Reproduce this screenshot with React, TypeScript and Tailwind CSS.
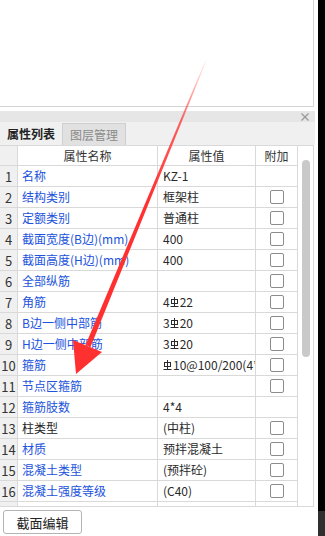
const rows: { name: string; value: React.ReactNode; black?: boolean; check: boolean }[] = [];

function Rebar() {
  return (
    <svg width="9" height="11" viewBox="0 0 9 11" className="inline-block shrink-0 align-[-1px] mr-[1px]" fill="none" stroke="currentColor" strokeWidth="1">
      <rect x="1.5" y="2.5" width="6" height="4" />
      <line x1="4.5" y1="0" x2="4.5" y2="9" />
      <line x1="0.5" y1="9.5" x2="8.5" y2="9.5" />
    </svg>
  );
}

rows.push(
  { name: "名称", value: "KZ-1", check: false },
  { name: "结构类别", value: "框架柱", check: true },
  { name: "定额类别", value: "普通柱", check: true },
  { name: "截面宽度(B边)(mm)", value: "400", check: true },
  { name: "截面高度(H边)(mm)", value: "400", check: true },
  { name: "全部纵筋", value: "", check: true },
  { name: "角筋", value: <>4<Rebar />22</>, check: true },
  { name: "B边一侧中部筋", value: <>3<Rebar />20</>, check: true },
  { name: "H边一侧中部筋", value: <>3<Rebar />20</>, check: true },
  { name: "箍筋", value: <><Rebar />10@100/200(4*4)</>, check: true },
  { name: "节点区箍筋", value: "", check: true },
  { name: "箍筋肢数", value: "4*4", check: false },
  { name: "柱类型", value: "(中柱)", black: true, check: true },
  { name: "材质", value: "预拌混凝土", check: true },
  { name: "混凝土类型", value: "(预拌砼)", check: true },
  { name: "混凝土强度等级", value: "(C40)", check: true },
  // 被遮住的下一行，只露出一条边
  { name: "", value: "", check: false },
);

export default function App() {
  return (
    <div
      className="relative flex w-[325px] h-[536px] overflow-hidden bg-white text-[12px] text-[#222]"
      style={{ fontFamily: '"Noto Sans CJK SC", "Noto Sans", sans-serif' }}
    >
      <div className="w-[318px] flex flex-col">
        {/* 上方面板 */}
        <div className="w-[314px] h-[107px] shrink-0 bg-white border-r border-b border-[#d4d4d4]" />
        <div className="h-[4px] shrink-0" />

        {/* 标题栏 */}
        <div className="w-[315px] h-[11px] shrink-0 bg-[#e6e6e6] flex items-center justify-end pr-[6px]">
          <svg width="8" height="8" viewBox="0 0 8 8" stroke="#9a9a9a" strokeWidth="1.2">
            <line x1="0.5" y1="0.5" x2="7.5" y2="7.5" />
            <line x1="7.5" y1="0.5" x2="0.5" y2="7.5" />
          </svg>
        </div>

        {/* 页签 */}
        <div className="w-[315px] h-[23px] shrink-0 bg-[#f0f0f0] flex items-stretch">
          <div className="w-[62px] flex items-center justify-center font-bold text-[#222] leading-none">属性列表</div>
          <div className="w-[64px] flex items-center justify-center bg-[#e1e1e1] border border-b-0 border-[#cfcfcf] text-[#8a8a8a] leading-none mt-[1px]">
            图层管理
          </div>
        </div>

        {/* 属性表 */}
        <div className="w-[314px] h-[362px] shrink-0 flex border-r border-b border-[#d9d9d9] overflow-hidden">
          <div className="w-[297px] overflow-hidden">
            <div className="flex h-[21px] border-t border-b border-[#d9d9d9] bg-white text-[#333]">
              <div className="w-[18px] border-r border-[#d9d9d9] bg-[#f0f0f0]" />
              <div className="w-[140px] border-r border-[#d9d9d9] flex items-center justify-center">属性名称</div>
              <div className="w-[98px] border-r border-[#d9d9d9] flex items-center justify-center">属性值</div>
              <div className="w-[41px] flex items-center justify-center">附加</div>
            </div>
            {rows.map((r, i) => (
              <div key={i} className="flex h-[21px] border-b border-[#d9d9d9] leading-none">
                <div className="w-[18px] border-r border-[#d9d9d9] bg-[#f0f0f0] flex items-center justify-center text-[#333] text-[13px]">
                  {r.name ? i + 1 : ""}
                </div>
                <div
                  className={`w-[140px] border-r border-[#d9d9d9] flex items-center pl-[4px] whitespace-nowrap overflow-hidden ${
                    r.black ? "text-[#222]" : "text-[#2152dc]"
                  }`}
                >
                  {r.name}
                </div>
                <div className="w-[98px] border-r border-[#d9d9d9] flex items-center pl-[5px] overflow-hidden text-[#2a2a2a]">
                  <span className="whitespace-nowrap">{r.value}</span>
                </div>
                <div className="w-[41px] flex items-center justify-center">
                  {r.check && <div className="w-[14px] h-[14px] border border-[#8c8c8c] rounded-[2px] bg-white" />}
                </div>
              </div>
            ))}
          </div>
          {/* 滚动条 */}
          <div className="w-[16px] border-l border-t border-[#d9d9d9] flex justify-center pt-[14px]">
            <div className="w-[8px] h-[197px] rounded-full bg-[#c9c9c9]" />
          </div>
        </div>

        {/* 底部按钮 */}
        <div className="pt-[3px] pl-[3px]">
          <button className="w-[79px] h-[24px] border border-[#b4b4b4] rounded-[3px] bg-white text-[13px] text-[#222] leading-none whitespace-nowrap">
            截面编辑
          </button>
        </div>
      </div>

      <div className="w-[7px] flex flex-col">
        <div className="flex-1 bg-black" />
        <div className="h-[25px] bg-[#2f2f2f]" />
      </div>

      {/* 红色箭头标注 */}
      <svg className="absolute left-0 top-0 pointer-events-none" width="325" height="536">
        <defs>
          <linearGradient id="fade" x1="207" y1="58" x2="150" y2="200" gradientUnits="userSpaceOnUse">
            <stop offset="0" stopColor="#ff3b3b" stopOpacity="0" />
            <stop offset="0.45" stopColor="#ff3b3b" stopOpacity="0.8" />
            <stop offset="1" stopColor="#ff3030" stopOpacity="1" />
          </linearGradient>
        </defs>
        <polygon points="207.6,58 206.4,58 85.5,345 90.5,347" fill="url(#fade)" />
        <polygon points="76,374 73,340 102,352" fill="#ff3030" />
      </svg>
    </div>
  );
}
